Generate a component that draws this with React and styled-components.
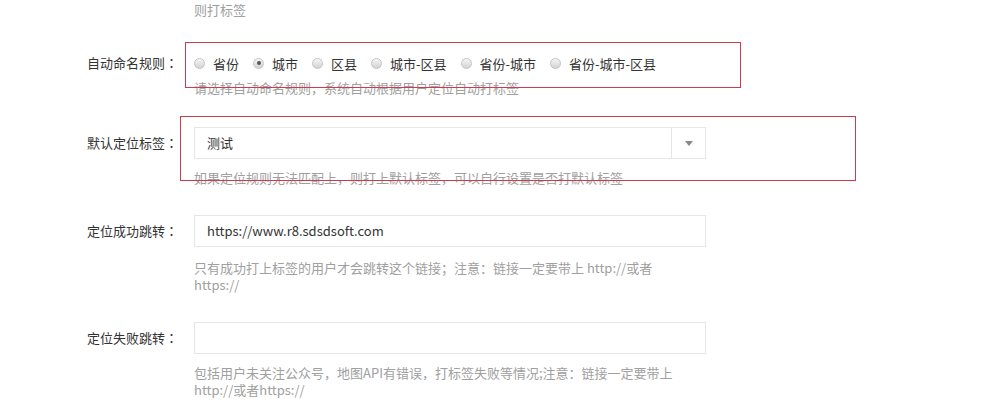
import React from 'react'
import styled, { createGlobalStyle } from 'styled-components'

const GlobalStyle = createGlobalStyle`
  html, body {
    margin: 0;
    padding: 0;
    background: #fff;
  }
  body {
    font-family: "Noto Sans CJK SC", "Noto Sans", sans-serif;
    font-size: 13px;
    color: #333;
  }
`

const Page = styled.div`
  width: 985px;
  height: 420px;
  overflow: hidden;
  padding-top: 1px;
  box-sizing: border-box;
`

const Row = styled.div`
  display: flex;
  align-items: flex-start;
  margin-bottom: ${p => p.$space ?? 29}px;
`

const Label = styled.div`
  width: 178px;
  flex: none;
  text-align: right;
  line-height: 32px;
  height: 32px;
  color: #333;
  white-space: nowrap;
`

// full-width colon set centred in its box, as on the original page
const Colon = styled.span`
  font-family: "Noto Sans CJK JP", sans-serif;
`

const Field = styled.div`
  position: relative;
  margin-left: 16px;
  width: 512px;
`

const Hint = styled.div`
  margin-top: ${p => p.$gap ?? 10}px;
  line-height: 17px;
  color: #a0a0a0;
  white-space: nowrap;
`

const TopHint = styled(Hint)`
  margin-left: 194px;
  margin-top: 0;
  margin-bottom: 29px;
`

const RadioGroup = styled.div`
  display: flex;
  align-items: center;
  height: 32px;
`

const RadioItem = styled.label`
  display: flex;
  align-items: center;
  margin-right: 14px;
  color: #333;
  white-space: nowrap;
`

const RadioDot = styled.span`
  position: relative;
  width: 11px;
  height: 11px;
  margin-right: 8px;
  border-radius: 50%;
  border: 1px solid #c4c4c4;
  box-sizing: border-box;
  background: linear-gradient(#f6f6f6, #d2d2d2);

  &::after {
    content: '';
    display: ${p => (p.$checked ? 'block' : 'none')};
    position: absolute;
    left: 2.5px;
    top: 2.5px;
    width: 4px;
    height: 4px;
    border-radius: 50%;
    background: #555;
  }
`

const TextBox = styled.div`
  height: 32px;
  box-sizing: border-box;
  border: 1px solid #e6e6e6;
  padding-left: 12px;
  line-height: 30px;
  color: #333;
`

const SelectBox = styled.div`
  display: flex;
  height: 32px;
  box-sizing: border-box;
  border: 1px solid #e6e6e6;
`

const SelectValue = styled.div`
  flex: 1;
  padding-left: 12px;
  line-height: 30px;
  color: #333;
`

const SelectArrow = styled.div`
  width: 33px;
  display: flex;
  align-items: center;
  justify-content: center;
  border-left: 1px solid #e6e6e6;

  &::before {
    content: '';
    border-left: 4px solid transparent;
    border-right: 4px solid transparent;
    border-top: 5px solid #888;
  }
`

// red annotation frames drawn over the fields
const Mark = styled.div`
  position: absolute;
  left: ${p => p.$left}px;
  top: ${p => p.$top}px;
  width: ${p => p.$width}px;
  height: ${p => p.$height}px;
  border: 1px solid #cf3a4e;
  box-sizing: border-box;
  pointer-events: none;
`

const namingRules = ['省份', '城市', '区县', '城市-区县', '省份-城市', '省份-城市-区县']

const App = () => {
  return (
    <Page>
      <GlobalStyle />
      <TopHint>则打标签</TopHint>

      <Row $space={31}>
        <Label>自动命名规则<Colon>：</Colon></Label>
        <Field>
          <RadioGroup>
            {namingRules.map(rule => (
              <RadioItem key={rule}>
                <RadioDot $checked={rule === '城市'} />
                {rule}
              </RadioItem>
            ))}
          </RadioGroup>
          <Hint $gap={0}>请选择自动命名规则，系统自动根据用户定位自动打标签</Hint>
          <Mark $left={-9} $top={-5} $width={556} $height={46} />
        </Field>
      </Row>

      <Row>
        <Label>默认定位标签<Colon>：</Colon></Label>
        <Field>
          <SelectBox>
            <SelectValue>测试</SelectValue>
            <SelectArrow />
          </SelectBox>
          <Hint>如果定位规则无法匹配上，则打上默认标签，可以自行设置是否打默认标签</Hint>
          <Mark $left={-14} $top={-11} $width={676} $height={65} />
        </Field>
      </Row>

      <Row>
        <Label>定位成功跳转<Colon>：</Colon></Label>
        <Field>
          <TextBox>https://www.r8.sdsdsoft.com</TextBox>
          <Hint $gap={12}>
            只有成功打上标签的用户才会跳转这个链接；注意：链接一定要带上 http://或者
            <br />
            https://
          </Hint>
        </Field>
      </Row>

      <Row>
        <Label>定位失败跳转<Colon>：</Colon></Label>
        <Field>
          <TextBox />
          <Hint>
            包括用户未关注公众号，地图API有错误，打标签失败等情况;注意：链接一定要带上
            <br />
            http://或者https://
          </Hint>
        </Field>
      </Row>
    </Page>
  )
}

export default App
